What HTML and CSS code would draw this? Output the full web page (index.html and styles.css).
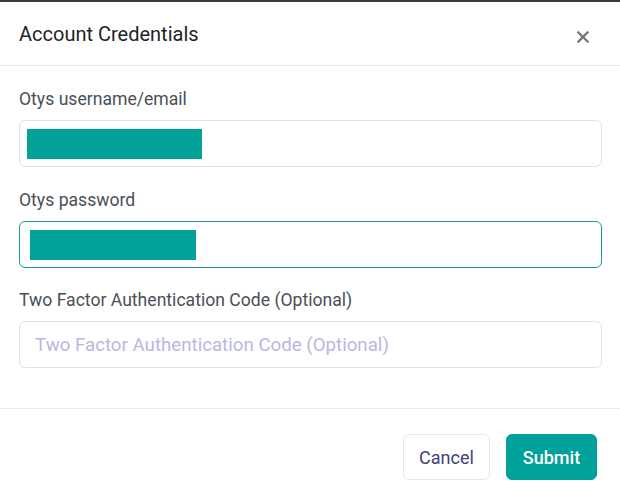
FILE: index.html
```html
<!DOCTYPE html>
<html>
<head>
<meta charset="utf-8">
<link rel="stylesheet" href="styles.css">
</head>
<body>
<div class="topbar"></div>
<div class="modal">
  <div class="modal-header">
    <h2 class="title">Account Credentials</h2>
    <button class="close" aria-label="Close">
      <svg width="12" height="12" viewBox="0 0 12 12"><path d="M1.5 1.5 L10.5 10.5 M10.5 1.5 L1.5 10.5" stroke="#7a7a7a" stroke-width="2.4" stroke-linecap="square"/></svg>
    </button>
  </div>
  <div class="modal-body">
    <div class="field">
      <label class="label">Otys username/email</label>
      <div class="input"><span class="redact redact-1"></span></div>
    </div>
    <div class="field">
      <label class="label">Otys password</label>
      <div class="input focused"><span class="redact redact-2"></span></div>
    </div>
    <div class="field last">
      <label class="label">Two Factor Authentication Code (Optional)</label>
      <div class="input"><span class="placeholder">Two Factor Authentication Code (Optional)</span></div>
    </div>
  </div>
  <div class="modal-footer">
    <button class="btn btn-cancel">Cancel</button>
    <button class="btn btn-submit">Submit</button>
  </div>
</div>
</body>
</html>
```
FILE: styles.css
```css
* { box-sizing: border-box; }
html, body { margin: 0; padding: 0; background: #fff; }
body { font-family: Roboto, "Noto Sans", sans-serif; width: 620px; height: 502px; overflow: hidden; }
.topbar { height: 2px; background: #3a3a3a; }
.modal { background: #fff; }
.modal-header {
  display: flex; align-items: center; justify-content: space-between;
  padding: 20px 31px 20px 19px;
  border-bottom: 1px solid #e9ecef;
  height: 64px;
}
.title { margin: 0; font-size: 20px; font-weight: 400; color: #212529; line-height: 24px; }
.close { border: 0; background: none; padding: 0; display: flex; margin-top: 6px; }
.modal-body { padding: 21px 18px 40px 19px; }
.field + .field { margin-top: 21px; }
.field.last { margin-top: 20px; }
.label { display: block; font-size: 17.6px; line-height: 24px; color: #495057; margin-bottom: 9px; }
.input {
  height: 47px; border: 1px solid #dee2e6; border-radius: 6px;
  display: flex; align-items: center; padding: 0 7px;
}
.input.focused { border-color: #1a9c95; }
.redact { display: block; background: #00a29a; height: 30px; }
.redact-1 { width: 175px; }
.redact-2 { width: 166px; margin-left: 3px; height: 30px; }
.placeholder { color: #b9b8e0; font-size: 18.7px; padding-left: 8px; }
.modal-footer {
  border-top: 1px solid #e9ecef;
  display: flex; justify-content: flex-end; gap: 16px;
  padding: 25px 23px 0 0;
}
.btn { height: 46px; border-radius: 6px; font-family: Roboto, sans-serif; font-size: 18px; padding: 0; }
.btn-cancel { width: 87px; background: #fff; border: 1px solid #e6e8ee; color: #3e4376; }
.btn-submit { width: 91px; background: #00a19a; border: 1px solid #00a19a; color: #fff; font-weight: 500; }
```
